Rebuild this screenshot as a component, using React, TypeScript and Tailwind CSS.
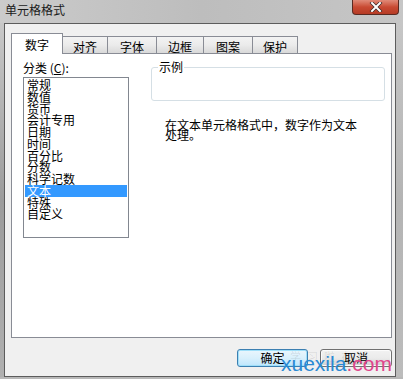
import React from "react"

const cjk = { fontFamily: '"Noto Sans CJK SC", "Liberation Sans", sans-serif' }

const categories = ["常规", "数值", "货币", "会计专用", "日期", "时间", "百分比", "分数", "科学记数", "文本", "特殊", "自定义"]

const tabs = [
  { label: "对齐", w: "w-[45px]" },
  { label: "字体", w: "w-[49px]" },
  { label: "边框", w: "w-[47px]" },
  { label: "图案", w: "w-[49px]" },
  { label: "保护", w: "w-[45px]" },
]

export default function App() {
  const selected = "文本"

  return (
    <div
      className="relative h-[379px] w-[403px] overflow-hidden bg-gradient-to-b from-[#d2d2d2] via-[#c0c0c0] to-[#b8b8b8] text-[#000]"
      style={cjk}
    >
      {/* title bar */}
      <div className="flex h-[23px] items-start justify-between bg-gradient-to-r from-[#cbcbcb] via-[#bdbdbd] to-[#c6c6c6]">
        <div className="pl-[5px] pt-[3px] text-[12px] leading-[14px] text-[#1a1a1a]">单元格格式</div>
        <div className="mr-[4px] flex h-[15px] w-[47px] items-center justify-center rounded-b-[4px] border border-t-0 border-[#5a2a22] bg-gradient-to-b from-[#e08a78] via-[#c94a33] to-[#b53b25]">
          <svg width="14" height="10" viewBox="0 0 14 10">
            <path d="M3 1 L11 9 M11 1 L3 9" stroke="#3a2a2a" strokeWidth="3.4" strokeLinecap="square" />
            <path d="M3 1 L11 9 M11 1 L3 9" stroke="#ffffff" strokeWidth="2" strokeLinecap="square" />
          </svg>
        </div>
      </div>

      <div className="flex h-[354px]">
        {/* left frame */}
        <div className="w-[4px] bg-gradient-to-b from-[#c8c8c8] via-[#9c9c9c] to-[#b0b0b0]" />

        {/* dialog body */}
        <div className="flex w-[392px] flex-col border border-[#5c5c5c] bg-[#f0f0f0] pl-[6px] pr-[3px] pt-[9px]">
          {/* tab strip */}
          <div className="flex h-[20px] items-end">
            <div className="relative z-10 -mb-px flex h-[21px] w-[52px] justify-center border border-b-0 border-[#898c95] bg-white pt-[4px] text-[12px] leading-[13px]">
              数字
            </div>
            {tabs.map((t) => (
              <div
                key={t.label}
                className={`flex h-[17px] ${t.w} justify-center border-r border-t border-[#898c95] bg-gradient-to-b from-[#f3f3f3] via-[#ebebeb] to-[#d9d9d9] pt-[3px] text-[12px] leading-[13px]`}
              >
                {t.label}
              </div>
            ))}
          </div>

          {/* tab page */}
          <div className="flex h-[285px] w-[381px] border border-[#898c95] bg-white pl-[11px] pt-[8px]">
            <div className="flex w-[106px] flex-col">
              <div className="h-[12px] text-[12px] leading-[12px]">
                分类 (<span className="underline">C</span>):
              </div>
              <div className="mt-[3px] h-[161px] border border-[#828790] bg-white pt-[1px]">
                {categories.map((c) => (
                  <div
                    key={c}
                    className={`mx-[1px] h-[11.75px] pl-[2px] text-[12px] leading-[11.75px] ${
                      c === selected ? "bg-[#3399ff] text-white" : "text-black"
                    }`}
                  >
                    {c}
                  </div>
                ))}
              </div>
            </div>

            <div className="ml-[22px] flex flex-col">
              <div className="relative mt-[5px] h-[34px] w-[234px] rounded-[3px] border border-[#d5dfe5]">
                <span className="absolute -top-[7px] left-[6px] bg-white px-[1px] text-[12px] leading-[12px]">示例</span>
              </div>
              <div className="ml-[14px] mt-[19px] text-[12px] leading-[9.5px]">
                在文本单元格格式中，数字作为文本
                <br />
                处理。
              </div>
            </div>
          </div>

          {/* buttons */}
          <div className="mt-[11px] flex justify-end gap-[12px]">
            <button className="flex h-[18px] w-[71px] items-center justify-center rounded-[3px] border border-[#3c7fb1] bg-gradient-to-b from-[#eaf6fd] via-[#d9f0fc] to-[#bee6fd] text-[12px] leading-[12px] shadow-[inset_0_0_0_1px_#9fdff9]">
              确定
            </button>
            <button className="flex h-[18px] w-[72px] items-center justify-center rounded-[3px] border border-[#707070] bg-gradient-to-b from-[#f2f2f2] via-[#ebebeb] to-[#cfcfcf] text-[12px] leading-[12px] shadow-[inset_0_0_0_1px_#fcfcfc]">
              取消
            </button>
          </div>
        </div>

        {/* right frame */}
        <div className="flex-1 bg-gradient-to-b from-[#c6c6c6] via-[#b4b4b4] to-[#bcbcbc]" />
      </div>

      {/* watermark */}
      <div className="pointer-events-none absolute left-[290px] top-[350px] text-[11px] leading-[12px] tracking-[6px] text-[#000]/10">
        学习啦在线
      </div>
      <div
        className="pointer-events-none absolute left-[281px] top-[352px] text-[21px] leading-[24px]"
        style={{ fontFamily: '"Liberation Sans", Arial, sans-serif' }}
      >
        <span className="text-[#2a8ad4]">xuexila</span>
        <span className="text-[#e0468c]">.com</span>
      </div>
    </div>
  )
}
